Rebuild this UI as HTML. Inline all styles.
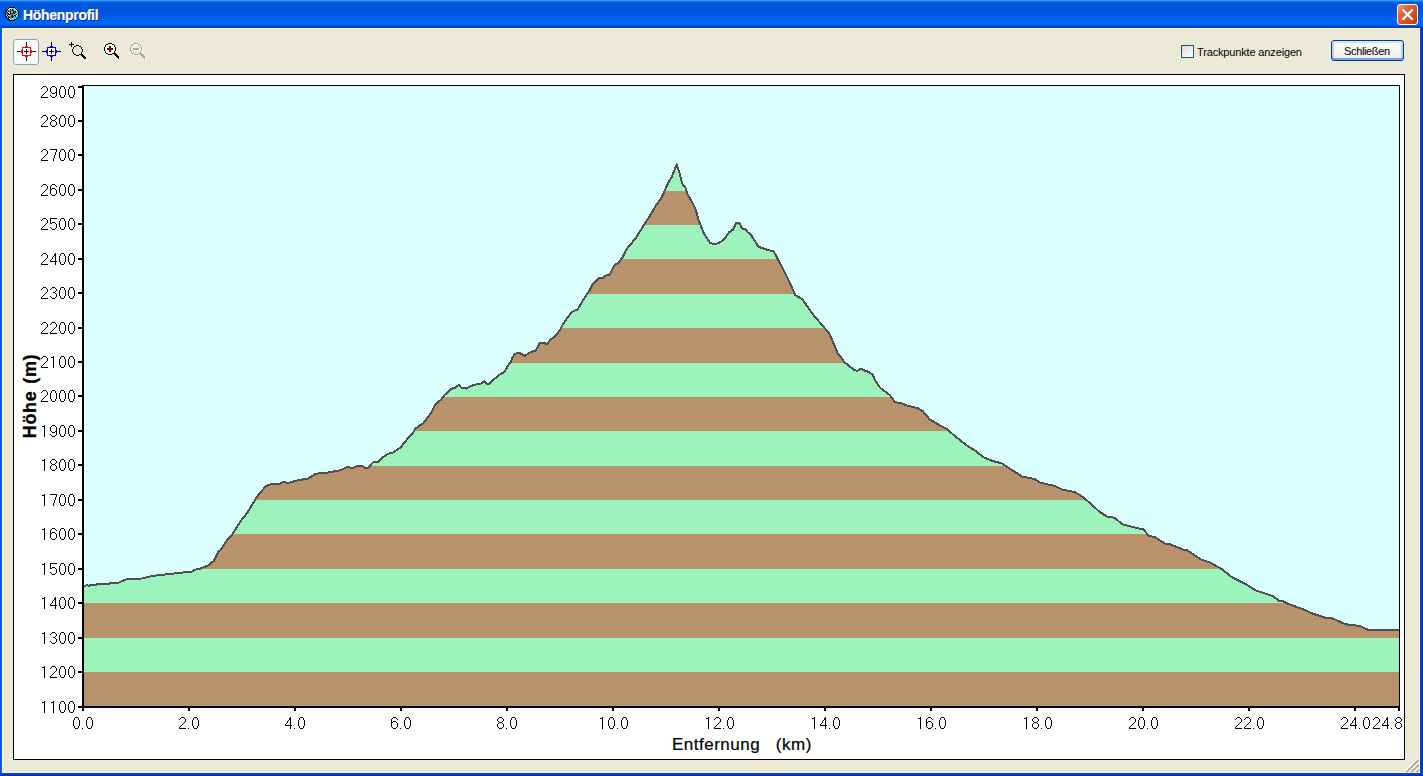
<!DOCTYPE html>
<html><head><meta charset="utf-8"><style>
html,body{margin:0;padding:0;width:1423px;height:776px;overflow:hidden;background:#ece9d8;font-family:"Liberation Sans",sans-serif;}
#win{position:absolute;left:0;top:0;width:1423px;height:776px;background:#ece9d8;}
#title{position:absolute;left:0;top:0;width:1423px;height:29px;
background:linear-gradient(to bottom,#3d95ff 0px,#3d95ff 1px,#0a74ff 1px,#0a74ff 2px,#0062f0 2px,#005ade 3px,#0055db 4px,#0055db 11px,#0059e3 14px,#0061ee 18px,#0066fa 21px,#0064f6 24px,#0061f0 25px,#0050da 26px,#0040c8 27px,#0040c8 28px,#fff6dc 28px,#fff6dc 29px);}
#lb{position:absolute;left:0;top:28px;width:2px;height:748px;background:linear-gradient(to right,#0050e0,#1868f0);}
#rb{position:absolute;left:1420px;top:28px;width:3px;height:748px;background:linear-gradient(to right,#0048d8,#0030a8);}
#bb{position:absolute;left:0;top:773px;width:1423px;height:3px;background:linear-gradient(to bottom,#0048e0,#0030b0);}
#hl1{position:absolute;left:2px;top:28px;width:1px;height:745px;background:#fff6dc;}
#hl2{position:absolute;left:2px;top:772px;width:1418px;height:1px;background:#fff6dc;}
#hl3{position:absolute;left:1419px;top:28px;width:1px;height:745px;background:#fff6dc;}
#ttext{position:absolute;left:23px;top:7px;font-weight:bold;font-size:14px;line-height:16px;color:#fff;text-shadow:1px 1px 0 #0a1e80;letter-spacing:-0.3px;-webkit-text-stroke:0.2px #fff}
#close{position:absolute;left:1397px;top:4px;width:19px;height:19px;border:1px solid #fff;border-radius:3px;background:linear-gradient(135deg,#f0a080 0%,#e26440 30%,#d84a1e 70%,#c03a10 100%);}
#panel{position:absolute;left:13px;top:74px;width:1390px;height:684px;border:1px solid #000;background:#fff;}
.yl{position:absolute;left:20px;width:56px;text-align:right;font-size:16px;line-height:19px;color:#000;}
.xl{position:absolute;top:714px;width:60px;text-align:center;font-size:16px;line-height:19px;color:#000;}
#ytitle{position:absolute;left:30px;top:396px;transform:translate(-50%,-50%) rotate(-90deg);font-weight:bold;font-size:18px;line-height:20px;white-space:pre;letter-spacing:0.6px;word-spacing:1.5px;-webkit-text-stroke:0.3px #000;}
#xtitle{position:absolute;left:672px;top:735px;font-size:17px;line-height:19px;white-space:pre;letter-spacing:0.5px;-webkit-text-stroke:0.2px #000;}
#tbtn{position:absolute;left:13px;top:39px;width:24px;height:24px;border:1px solid #8aa2ba;border-radius:3px;background:#fcfcfb;}
#chk{position:absolute;left:1181px;top:45px;width:11px;height:11px;border:1px solid #1c5180;background:linear-gradient(135deg,#dcdcd6,#fff);}
#chkt{position:absolute;left:1197px;top:46px;font-size:11px;letter-spacing:-0.15px;color:#000;white-space:nowrap;}
#btn{position:absolute;left:1331px;top:40px;width:71px;height:19px;border:1px solid #003c74;border-radius:3px;background:linear-gradient(to bottom,#fcfcfa,#f0efea);box-shadow:inset 0 2px 0 #cde4ff, inset 0 -2px 0 #7d9ef0, inset 2px 0 0 #b4d0fa, inset -2px 0 0 #b4d0fa;}
#btnt{position:absolute;left:1344px;top:45px;letter-spacing:-0.35px;font-size:11px;color:#000;white-space:nowrap;}
</style></head><body><div id="win">
<div id="title"></div>
<div id="lb"></div><div id="rb"></div><div id="bb"></div>
<div id="hl1"></div><div id="hl2"></div><div id="hl3"></div>
<div id="ttext">Höhenprofil</div>
<div id="close"></div>
<div id="tbtn"></div>
<div id="chk"></div><div id="chkt">Trackpunkte anzeigen</div>
<div id="btn"></div><div id="btnt">Schließen</div>
<div id="panel"></div>
<svg width="1423" height="776" style="position:absolute;left:0;top:0"><g shape-rendering="crispEdges"><rect x="84" y="88" width="1315" height="34" fill="#9cf4bc"/><rect x="84" y="122" width="1315" height="34" fill="#b8926a"/><rect x="84" y="156" width="1315" height="35" fill="#9cf4bc"/><rect x="84" y="191" width="1315" height="34" fill="#b8926a"/><rect x="84" y="225" width="1315" height="34" fill="#9cf4bc"/><rect x="84" y="259" width="1315" height="35" fill="#b8926a"/><rect x="84" y="294" width="1315" height="34" fill="#9cf4bc"/><rect x="84" y="328" width="1315" height="35" fill="#b8926a"/><rect x="84" y="363" width="1315" height="34" fill="#9cf4bc"/><rect x="84" y="397" width="1315" height="34" fill="#b8926a"/><rect x="84" y="431" width="1315" height="35" fill="#9cf4bc"/><rect x="84" y="466" width="1315" height="34" fill="#b8926a"/><rect x="84" y="500" width="1315" height="34" fill="#9cf4bc"/><rect x="84" y="534" width="1315" height="35" fill="#b8926a"/><rect x="84" y="569" width="1315" height="34" fill="#9cf4bc"/><rect x="84" y="603" width="1315" height="35" fill="#b8926a"/><rect x="84" y="638" width="1315" height="34" fill="#9cf4bc"/><rect x="84" y="672" width="1315" height="34" fill="#b8926a"/></g><polygon points="84,86 84,586.2 84.0,586.2 87.5,585.0 89.0,586.5 90.5,584.9 96.5,584.6 97.5,583.9 109.5,583.7 110.5,582.7 118.5,582.6 127.0,579.0 141.9,578.5 153.0,575.8 161.0,574.9 176.7,573.2 192.5,571.5 194.7,569.8 199.2,569.0 208.0,565.6 213.9,560.8 218.4,551.8 220.0,550.6 226.2,541.3 232.4,534.4 240.1,522.0 247.8,511.9 254.8,500.3 257.1,496.5 261.8,491.0 265.6,486.4 271.0,484.1 280.3,483.6 283.4,481.8 288.0,483.0 297.3,480.5 308.2,478.4 315.9,473.7 328.3,472.5 340.6,470.2 346.8,467.1 353.0,467.8 358.2,465.7 362.1,466.1 364.7,467.6 367.9,467.9 373.0,462.5 377.6,462.2 382.7,457.3 388.5,453.7 393.0,452.4 400.1,447.7 402.0,445.7 409.1,436.7 413.0,432.8 414.9,429.0 418.1,426.6 423.3,423.2 427.8,417.4 431.0,412.9 434.9,405.1 437.5,402.6 440.7,400.0 444.6,394.8 447.8,392.2 451.0,388.8 455.0,388.0 458.9,384.8 461.4,388.0 466.6,388.6 469.2,386.7 474.3,384.8 480.8,383.5 484.6,381.5 487.2,383.9 489.8,383.5 492.4,380.3 496.2,377.7 499.5,374.8 504.6,371.9 507.8,366.1 511.0,361.6 512.3,357.7 514.9,353.8 519.4,352.9 525.2,355.8 530.4,352.2 535.5,350.6 540.0,342.9 545.2,342.9 546.5,344.4 551.0,339.3 555.0,336.3 560.2,329.9 562.7,324.7 567.9,317.0 571.8,311.9 577.6,309.5 580.8,304.1 584.6,297.7 589.1,291.2 592.4,284.8 598.8,278.1 603.3,277.7 606.5,275.1 609.1,275.5 614.3,265.5 618.1,262.9 621.4,259.0 623.9,255.2 625.9,250.0 635.7,238.1 644.2,224.7 650.4,214.9 656.5,204.5 660.2,200.0 664.0,192.4 667.9,183.4 671.8,176.9 676.6,164.5 679.5,173.0 682.0,183.4 685.3,187.2 687.2,193.7 692.4,202.7 695.6,209.1 698.8,220.7 704.0,233.6 710.4,243.3 715.6,243.9 719.4,242.6 724.6,238.8 729.1,232.3 733.0,229.7 736.2,222.6 739.4,222.6 742.0,228.5 745.2,229.1 747.8,232.3 751.0,234.9 754.2,240.0 758.4,246.8 766.9,249.6 773.9,251.6 782.5,268.0 789.5,282.2 795.2,295.0 802.3,299.2 812.2,313.4 819.3,321.9 829.2,333.3 833.9,344.2 837.7,353.2 841.0,357.1 844.2,362.2 849.3,366.1 853.2,369.3 857.1,371.0 860.9,368.7 864.8,370.6 868.7,371.9 872.5,374.5 875.7,381.5 879.6,387.3 885.4,391.9 889.9,395.1 895.1,402.2 900.9,403.2 908.6,406.0 917.6,408.0 922.8,411.2 929.2,418.9 938.7,424.8 946.4,428.7 952.6,434.1 964.9,444.1 975.8,451.1 983.5,457.3 992.8,461.1 1002.0,463.4 1011.3,469.6 1022.1,476.6 1034.5,478.9 1040.7,482.8 1054.6,485.9 1062.3,489.7 1074.7,492.0 1082.4,496.7 1090.0,503.1 1099.3,511.6 1107.0,516.6 1114.7,517.8 1122.5,524.3 1131.7,526.8 1143.3,529.4 1148.8,535.6 1154.9,537.2 1165.8,544.1 1168.9,543.8 1182.8,549.5 1185.9,549.5 1201.3,559.6 1210.6,562.7 1221.4,568.9 1232.2,577.4 1244.6,583.5 1255.4,590.2 1272.4,595.9 1279.0,600.8 1283.3,601.3 1289.1,604.2 1302.8,609.2 1312.0,613.3 1325.7,617.9 1331.2,617.9 1345.8,624.3 1360.4,626.1 1367.7,629.7 1399.0,629.7 1399,629.7 1399,86" fill="#dcffff"/><polyline points="84.0,586.2 87.5,585.0 89.0,586.5 90.5,584.9 96.5,584.6 97.5,583.9 109.5,583.7 110.5,582.7 118.5,582.6 127.0,579.0 141.9,578.5 153.0,575.8 161.0,574.9 176.7,573.2 192.5,571.5 194.7,569.8 199.2,569.0 208.0,565.6 213.9,560.8 218.4,551.8 220.0,550.6 226.2,541.3 232.4,534.4 240.1,522.0 247.8,511.9 254.8,500.3 257.1,496.5 261.8,491.0 265.6,486.4 271.0,484.1 280.3,483.6 283.4,481.8 288.0,483.0 297.3,480.5 308.2,478.4 315.9,473.7 328.3,472.5 340.6,470.2 346.8,467.1 353.0,467.8 358.2,465.7 362.1,466.1 364.7,467.6 367.9,467.9 373.0,462.5 377.6,462.2 382.7,457.3 388.5,453.7 393.0,452.4 400.1,447.7 402.0,445.7 409.1,436.7 413.0,432.8 414.9,429.0 418.1,426.6 423.3,423.2 427.8,417.4 431.0,412.9 434.9,405.1 437.5,402.6 440.7,400.0 444.6,394.8 447.8,392.2 451.0,388.8 455.0,388.0 458.9,384.8 461.4,388.0 466.6,388.6 469.2,386.7 474.3,384.8 480.8,383.5 484.6,381.5 487.2,383.9 489.8,383.5 492.4,380.3 496.2,377.7 499.5,374.8 504.6,371.9 507.8,366.1 511.0,361.6 512.3,357.7 514.9,353.8 519.4,352.9 525.2,355.8 530.4,352.2 535.5,350.6 540.0,342.9 545.2,342.9 546.5,344.4 551.0,339.3 555.0,336.3 560.2,329.9 562.7,324.7 567.9,317.0 571.8,311.9 577.6,309.5 580.8,304.1 584.6,297.7 589.1,291.2 592.4,284.8 598.8,278.1 603.3,277.7 606.5,275.1 609.1,275.5 614.3,265.5 618.1,262.9 621.4,259.0 623.9,255.2 625.9,250.0 635.7,238.1 644.2,224.7 650.4,214.9 656.5,204.5 660.2,200.0 664.0,192.4 667.9,183.4 671.8,176.9 676.6,164.5 679.5,173.0 682.0,183.4 685.3,187.2 687.2,193.7 692.4,202.7 695.6,209.1 698.8,220.7 704.0,233.6 710.4,243.3 715.6,243.9 719.4,242.6 724.6,238.8 729.1,232.3 733.0,229.7 736.2,222.6 739.4,222.6 742.0,228.5 745.2,229.1 747.8,232.3 751.0,234.9 754.2,240.0 758.4,246.8 766.9,249.6 773.9,251.6 782.5,268.0 789.5,282.2 795.2,295.0 802.3,299.2 812.2,313.4 819.3,321.9 829.2,333.3 833.9,344.2 837.7,353.2 841.0,357.1 844.2,362.2 849.3,366.1 853.2,369.3 857.1,371.0 860.9,368.7 864.8,370.6 868.7,371.9 872.5,374.5 875.7,381.5 879.6,387.3 885.4,391.9 889.9,395.1 895.1,402.2 900.9,403.2 908.6,406.0 917.6,408.0 922.8,411.2 929.2,418.9 938.7,424.8 946.4,428.7 952.6,434.1 964.9,444.1 975.8,451.1 983.5,457.3 992.8,461.1 1002.0,463.4 1011.3,469.6 1022.1,476.6 1034.5,478.9 1040.7,482.8 1054.6,485.9 1062.3,489.7 1074.7,492.0 1082.4,496.7 1090.0,503.1 1099.3,511.6 1107.0,516.6 1114.7,517.8 1122.5,524.3 1131.7,526.8 1143.3,529.4 1148.8,535.6 1154.9,537.2 1165.8,544.1 1168.9,543.8 1182.8,549.5 1185.9,549.5 1201.3,559.6 1210.6,562.7 1221.4,568.9 1232.2,577.4 1244.6,583.5 1255.4,590.2 1272.4,595.9 1279.0,600.8 1283.3,601.3 1289.1,604.2 1302.8,609.2 1312.0,613.3 1325.7,617.9 1331.2,617.9 1345.8,624.3 1360.4,626.1 1367.7,629.7 1399.0,629.7" fill="none" stroke="#4f4f53" stroke-width="2" stroke-linejoin="round" shape-rendering="crispEdges"/><g shape-rendering="crispEdges" fill="#000"><rect x="82" y="85" width="2" height="622"/><rect x="82" y="706" width="1318" height="2"/><rect x="84" y="85" width="1316" height="1"/><rect x="1399" y="85" width="1" height="622"/><rect x="78" y="86" width="4" height="2"/><rect x="78" y="120" width="4" height="2"/><rect x="78" y="154" width="4" height="2"/><rect x="78" y="189" width="4" height="2"/><rect x="78" y="223" width="4" height="2"/><rect x="78" y="258" width="4" height="2"/><rect x="78" y="292" width="4" height="2"/><rect x="78" y="327" width="4" height="2"/><rect x="78" y="361" width="4" height="2"/><rect x="78" y="395" width="4" height="2"/><rect x="78" y="430" width="4" height="2"/><rect x="78" y="464" width="4" height="2"/><rect x="78" y="499" width="4" height="2"/><rect x="78" y="533" width="4" height="2"/><rect x="78" y="568" width="4" height="2"/><rect x="78" y="602" width="4" height="2"/><rect x="78" y="637" width="4" height="2"/><rect x="78" y="671" width="4" height="2"/><rect x="78" y="706" width="4" height="2"/><rect x="82" y="708" width="2" height="3"/><rect x="188" y="708" width="2" height="3"/><rect x="294" y="708" width="2" height="3"/><rect x="400" y="708" width="2" height="3"/><rect x="506" y="708" width="2" height="3"/><rect x="612" y="708" width="2" height="3"/><rect x="718" y="708" width="2" height="3"/><rect x="824" y="708" width="2" height="3"/><rect x="930" y="708" width="2" height="3"/><rect x="1036" y="708" width="2" height="3"/><rect x="1142" y="708" width="2" height="3"/><rect x="1248" y="708" width="2" height="3"/><rect x="1354" y="708" width="2" height="3"/><rect x="1398" y="708" width="2" height="3"/></g></svg>
<svg width="1423" height="80" style="position:absolute;left:0;top:0"><g shape-rendering="crispEdges"><rect x="26" y="42" width="1" height="3" fill="#000"/><rect x="26" y="58" width="1" height="3" fill="#000"/><rect x="17" y="51" width="3" height="1" fill="#000"/><rect x="33" y="51" width="3" height="1" fill="#000"/><rect x="26" y="45" width="1" height="1" fill="#ff0000"/><rect x="25" y="46" width="3" height="1" fill="#ff0000"/><rect x="26" y="57" width="1" height="1" fill="#ff0000"/><rect x="25" y="56" width="3" height="1" fill="#ff0000"/><rect x="20" y="51" width="1" height="1" fill="#ff0000"/><rect x="21" y="50" width="1" height="3" fill="#ff0000"/><rect x="32" y="51" width="1" height="1" fill="#ff0000"/><rect x="31" y="50" width="1" height="3" fill="#ff0000"/><rect x="22" y="47" width="9" height="9" fill="#ff0000"/><rect x="23" y="48" width="7" height="7" fill="#fff"/><rect x="24" y="51" width="5" height="1" fill="#000"/><rect x="26" y="49" width="1" height="5" fill="#000"/><rect x="51" y="42" width="1" height="3" fill="#000"/><rect x="51" y="58" width="1" height="3" fill="#000"/><rect x="42" y="51" width="3" height="1" fill="#000"/><rect x="58" y="51" width="3" height="1" fill="#000"/><rect x="51" y="45" width="1" height="1" fill="#0000ff"/><rect x="50" y="46" width="3" height="1" fill="#0000ff"/><rect x="51" y="57" width="1" height="1" fill="#0000ff"/><rect x="50" y="56" width="3" height="1" fill="#0000ff"/><rect x="45" y="51" width="1" height="1" fill="#0000ff"/><rect x="46" y="50" width="1" height="3" fill="#0000ff"/><rect x="57" y="51" width="1" height="1" fill="#0000ff"/><rect x="56" y="50" width="1" height="3" fill="#0000ff"/><rect x="47" y="47" width="9" height="9" fill="#0000ff"/><rect x="48" y="48" width="7" height="7" fill="#fff"/><rect x="49" y="51" width="5" height="1" fill="#000"/><rect x="51" y="49" width="1" height="5" fill="#000"/></g><g shape-rendering="crispEdges"><path fill="#000" d="M69 44h5v1h-5zM71 42h1v5h-1zM76 45h3v1h-3zM74 46h2v1h-2zM79 46h2v1h-2zM73 47h1v1h-1zM81 47h1v1h-1zM73 48h1v1h-1zM81 48h1v1h-1zM72 49h1v1h-1zM82 49h1v1h-1zM72 50h1v1h-1zM82 50h1v1h-1zM72 51h1v1h-1zM82 51h1v1h-1zM73 52h1v1h-1zM81 52h1v1h-1zM73 53h1v1h-1zM81 53h1v1h-1zM74 54h2v1h-2zM79 54h2v1h-2zM76 55h3v1h-3zM81 54h2v1h-2zM81 55h3v1h-3zM82 56h3v1h-3zM83 57h3v1h-3zM84 58h2v1h-2z"/><path fill="#fff" d="M108 44h4v1h-4zM106 45h8v1h-8zM106 46h8v1h-8zM105 47h10v1h-10zM105 48h10v1h-10zM105 49h10v1h-10zM105 50h10v1h-10zM106 51h8v1h-8zM106 52h8v1h-8zM108 53h4v1h-4z"/><path fill="#000" d="M108 43h4v1h-4zM106 44h2v1h-2zM112 44h2v1h-2zM105 45h1v1h-1zM114 45h1v1h-1zM105 46h1v1h-1zM114 46h1v1h-1zM104 47h1v1h-1zM115 47h1v1h-1zM104 48h1v1h-1zM115 48h1v1h-1zM104 49h1v1h-1zM115 49h1v1h-1zM104 50h1v1h-1zM115 50h1v1h-1zM105 51h1v1h-1zM114 51h1v1h-1zM105 52h1v1h-1zM114 52h1v1h-1zM106 53h2v1h-2zM112 53h2v1h-2zM108 54h4v1h-4zM114 53h2v1h-2zM114 54h3v1h-3zM115 55h3v1h-3zM116 56h3v1h-3zM117 57h2v1h-2zM118 58h1v1h-1z"/><path fill="#800000" d="M107 48h6v2h-6zM109 46h2v6h-2z"/><path fill="#fff" d="M135 44h4v1h-4zM133 45h2v1h-2zM139 45h2v1h-2zM132 46h1v1h-1zM141 46h1v1h-1zM132 47h1v1h-1zM141 47h1v1h-1zM131 48h1v1h-1zM142 48h1v1h-1zM131 49h1v1h-1zM142 49h1v1h-1zM131 50h1v1h-1zM142 50h1v1h-1zM131 51h1v1h-1zM142 51h1v1h-1zM132 52h1v1h-1zM141 52h1v1h-1zM132 53h1v1h-1zM141 53h1v1h-1zM133 54h2v1h-2zM139 54h2v1h-2zM135 55h4v1h-4zM141 54h2v1h-2zM141 55h3v1h-3zM142 56h3v1h-3zM143 57h3v1h-3zM144 58h2v1h-2zM134 49h6v2h-6z"/><path fill="#aca899" d="M134 43h4v1h-4zM132 44h2v1h-2zM138 44h2v1h-2zM131 45h1v1h-1zM140 45h1v1h-1zM131 46h1v1h-1zM140 46h1v1h-1zM130 47h1v1h-1zM141 47h1v1h-1zM130 48h1v1h-1zM141 48h1v1h-1zM130 49h1v1h-1zM141 49h1v1h-1zM130 50h1v1h-1zM141 50h1v1h-1zM131 51h1v1h-1zM140 51h1v1h-1zM131 52h1v1h-1zM140 52h1v1h-1zM132 53h2v1h-2zM138 53h2v1h-2zM134 54h4v1h-4zM140 53h2v1h-2zM140 54h3v1h-3zM141 55h3v1h-3zM142 56h3v1h-3zM143 57h2v1h-2zM144 58h1v1h-1zM133 48h6v2h-6z"/></g><g shape-rendering="crispEdges"><path fill="#000000" d="M9 7h1v1h-1zM10 7h1v1h-1zM11 7h1v1h-1zM12 7h1v1h-1zM13 7h1v1h-1zM14 7h1v1h-1zM8 8h1v1h-1zM15 8h1v1h-1zM7 9h1v1h-1zM10 9h1v1h-1zM12 9h1v1h-1zM16 9h1v1h-1zM6 10h1v1h-1zM12 10h1v1h-1zM17 10h1v1h-1zM6 11h1v1h-1zM8 11h1v1h-1zM10 11h1v1h-1zM13 11h1v1h-1zM15 11h1v1h-1zM18 11h1v1h-1zM5 12h1v1h-1zM7 12h1v1h-1zM10 12h1v1h-1zM13 12h1v1h-1zM15 12h1v1h-1zM18 12h1v1h-1zM5 13h1v1h-1zM8 13h1v1h-1zM10 13h1v1h-1zM13 13h1v1h-1zM14 13h1v1h-1zM18 13h1v1h-1zM5 14h1v1h-1zM8 14h1v1h-1zM9 14h1v1h-1zM16 14h1v1h-1zM18 14h1v1h-1zM5 15h1v1h-1zM7 15h1v1h-1zM12 15h1v1h-1zM14 15h1v1h-1zM15 15h1v1h-1zM18 15h1v1h-1zM5 16h1v1h-1zM6 16h1v1h-1zM8 16h1v1h-1zM11 16h1v1h-1zM12 16h1v1h-1zM13 16h1v1h-1zM15 16h1v1h-1zM18 16h1v1h-1zM6 17h1v1h-1zM9 17h1v1h-1zM12 17h1v1h-1zM17 17h1v1h-1zM7 18h1v1h-1zM8 18h1v1h-1zM16 18h1v1h-1zM8 19h1v1h-1zM9 19h1v1h-1zM14 19h1v1h-1zM15 19h1v1h-1zM9 20h1v1h-1zM10 20h1v1h-1zM11 20h1v1h-1zM12 20h1v1h-1zM13 20h1v1h-1zM14 20h1v1h-1z"/><path fill="#f4dcd4" d="M9 8h1v1h-1zM10 8h1v1h-1zM11 8h1v1h-1zM14 8h1v1h-1zM8 9h1v1h-1zM9 9h1v1h-1zM15 9h1v1h-1zM16 10h1v1h-1zM7 11h1v1h-1zM8 12h1v1h-1zM9 13h1v1h-1zM17 14h1v1h-1zM8 15h1v1h-1zM16 15h1v1h-1zM14 16h1v1h-1zM17 16h1v1h-1zM9 18h1v1h-1zM12 18h1v1h-1zM10 19h1v1h-1z"/><path fill="#00f0f0" d="M12 8h1v1h-1zM13 8h1v1h-1zM11 9h1v1h-1zM13 9h1v1h-1zM14 9h1v1h-1zM9 10h1v1h-1zM14 10h1v1h-1zM15 10h1v1h-1zM9 11h1v1h-1zM11 11h1v1h-1zM12 11h1v1h-1zM16 11h1v1h-1zM17 11h1v1h-1zM6 12h1v1h-1zM9 12h1v1h-1zM11 12h1v1h-1zM12 12h1v1h-1zM16 12h1v1h-1zM17 12h1v1h-1zM15 13h1v1h-1zM16 13h1v1h-1zM17 13h1v1h-1zM6 14h1v1h-1zM13 14h1v1h-1zM14 14h1v1h-1zM15 14h1v1h-1zM6 15h1v1h-1zM9 15h1v1h-1zM10 15h1v1h-1zM13 15h1v1h-1zM17 15h1v1h-1zM7 16h1v1h-1zM9 16h1v1h-1zM10 16h1v1h-1zM16 16h1v1h-1zM7 17h1v1h-1zM13 17h1v1h-1zM14 17h1v1h-1zM15 17h1v1h-1zM16 17h1v1h-1zM10 18h1v1h-1zM11 18h1v1h-1zM13 18h1v1h-1zM14 18h1v1h-1zM15 18h1v1h-1zM11 19h1v1h-1zM12 19h1v1h-1zM13 19h1v1h-1z"/><path fill="#ff1010" d="M7 10h1v1h-1zM8 10h1v1h-1zM10 10h1v1h-1zM11 10h1v1h-1zM13 10h1v1h-1zM14 11h1v1h-1zM14 12h1v1h-1zM6 13h1v1h-1zM7 13h1v1h-1zM11 13h1v1h-1zM12 13h1v1h-1zM7 14h1v1h-1zM10 14h1v1h-1zM11 14h1v1h-1zM12 14h1v1h-1zM11 15h1v1h-1zM8 17h1v1h-1zM10 17h1v1h-1zM11 17h1v1h-1z"/></g><g stroke="#fff" stroke-width="2.3" stroke-linecap="square"><line x1="1403.3" y1="10.3" x2="1411.9" y2="18.9"/><line x1="1411.9" y1="10.3" x2="1403.3" y2="18.9"/></g><g stroke-width="1" shape-rendering="crispEdges"></g></svg>
<svg width="23" height="24" style="position:absolute;left:1400px;top:752px"><line x1="5" y1="19.5" x2="18" y2="6.5" stroke="#ffffff" stroke-width="1.3"/><line x1="6.3" y1="20.2" x2="18.6" y2="7.9" stroke="#aca899" stroke-width="1.8"/><line x1="10" y1="19.5" x2="18" y2="11.5" stroke="#ffffff" stroke-width="1.3"/><line x1="11.3" y1="20.2" x2="18.6" y2="12.9" stroke="#aca899" stroke-width="1.8"/><line x1="15" y1="19.5" x2="18" y2="16.5" stroke="#ffffff" stroke-width="1.3"/><line x1="16.3" y1="20.2" x2="18.6" y2="17.9" stroke="#aca899" stroke-width="1.8"/></svg>
<svg width="1423" height="776" style="position:absolute;left:0;top:0" shape-rendering="crispEdges"><g fill="#000"><path transform="translate(41 86)" d="M2 0h3v1h-3zM1 1h1v1h-1zM5 1h1v1h-1zM0 2h1v1h-1zM6 2h1v1h-1zM6 3h1v1h-1zM6 4h1v1h-1zM5 5h1v1h-1zM4 6h1v1h-1zM3 7h1v1h-1zM2 8h1v1h-1zM1 9h1v1h-1zM0 10h1v1h-1zM0 11h7v1h-7z"/><path transform="translate(50 86)" d="M2 0h3v1h-3zM1 1h1v1h-1zM5 1h1v1h-1zM0 2h1v1h-1zM6 2h1v1h-1zM0 3h1v1h-1zM6 3h1v1h-1zM0 4h1v1h-1zM6 4h1v1h-1zM0 5h1v1h-1zM6 5h1v1h-1zM1 6h1v1h-1zM5 6h2v1h-2zM2 7h3v1h-3zM6 7h1v1h-1zM6 8h1v1h-1zM0 9h1v1h-1zM6 9h1v1h-1zM1 10h1v1h-1zM5 10h1v1h-1zM2 11h3v1h-3z"/><path transform="translate(59 86)" d="M2 0h3v1h-3zM1 1h1v1h-1zM5 1h1v1h-1zM1 2h1v1h-1zM5 2h1v1h-1zM0 3h1v1h-1zM6 3h1v1h-1zM0 4h1v1h-1zM6 4h1v1h-1zM0 5h1v1h-1zM6 5h1v1h-1zM0 6h1v1h-1zM6 6h1v1h-1zM0 7h1v1h-1zM6 7h1v1h-1zM0 8h1v1h-1zM6 8h1v1h-1zM1 9h1v1h-1zM5 9h1v1h-1zM1 10h1v1h-1zM5 10h1v1h-1zM2 11h3v1h-3z"/><path transform="translate(68 86)" d="M2 0h3v1h-3zM1 1h1v1h-1zM5 1h1v1h-1zM1 2h1v1h-1zM5 2h1v1h-1zM0 3h1v1h-1zM6 3h1v1h-1zM0 4h1v1h-1zM6 4h1v1h-1zM0 5h1v1h-1zM6 5h1v1h-1zM0 6h1v1h-1zM6 6h1v1h-1zM0 7h1v1h-1zM6 7h1v1h-1zM0 8h1v1h-1zM6 8h1v1h-1zM1 9h1v1h-1zM5 9h1v1h-1zM1 10h1v1h-1zM5 10h1v1h-1zM2 11h3v1h-3z"/><path transform="translate(41 115)" d="M2 0h3v1h-3zM1 1h1v1h-1zM5 1h1v1h-1zM0 2h1v1h-1zM6 2h1v1h-1zM6 3h1v1h-1zM6 4h1v1h-1zM5 5h1v1h-1zM4 6h1v1h-1zM3 7h1v1h-1zM2 8h1v1h-1zM1 9h1v1h-1zM0 10h1v1h-1zM0 11h7v1h-7z"/><path transform="translate(50 115)" d="M2 0h3v1h-3zM1 1h1v1h-1zM5 1h1v1h-1zM0 2h1v1h-1zM6 2h1v1h-1zM0 3h1v1h-1zM6 3h1v1h-1zM1 4h1v1h-1zM5 4h1v1h-1zM2 5h3v1h-3zM1 6h1v1h-1zM5 6h1v1h-1zM0 7h1v1h-1zM6 7h1v1h-1zM0 8h1v1h-1zM6 8h1v1h-1zM0 9h1v1h-1zM6 9h1v1h-1zM1 10h1v1h-1zM5 10h1v1h-1zM2 11h3v1h-3z"/><path transform="translate(59 115)" d="M2 0h3v1h-3zM1 1h1v1h-1zM5 1h1v1h-1zM1 2h1v1h-1zM5 2h1v1h-1zM0 3h1v1h-1zM6 3h1v1h-1zM0 4h1v1h-1zM6 4h1v1h-1zM0 5h1v1h-1zM6 5h1v1h-1zM0 6h1v1h-1zM6 6h1v1h-1zM0 7h1v1h-1zM6 7h1v1h-1zM0 8h1v1h-1zM6 8h1v1h-1zM1 9h1v1h-1zM5 9h1v1h-1zM1 10h1v1h-1zM5 10h1v1h-1zM2 11h3v1h-3z"/><path transform="translate(68 115)" d="M2 0h3v1h-3zM1 1h1v1h-1zM5 1h1v1h-1zM1 2h1v1h-1zM5 2h1v1h-1zM0 3h1v1h-1zM6 3h1v1h-1zM0 4h1v1h-1zM6 4h1v1h-1zM0 5h1v1h-1zM6 5h1v1h-1zM0 6h1v1h-1zM6 6h1v1h-1zM0 7h1v1h-1zM6 7h1v1h-1zM0 8h1v1h-1zM6 8h1v1h-1zM1 9h1v1h-1zM5 9h1v1h-1zM1 10h1v1h-1zM5 10h1v1h-1zM2 11h3v1h-3z"/><path transform="translate(41 149)" d="M2 0h3v1h-3zM1 1h1v1h-1zM5 1h1v1h-1zM0 2h1v1h-1zM6 2h1v1h-1zM6 3h1v1h-1zM6 4h1v1h-1zM5 5h1v1h-1zM4 6h1v1h-1zM3 7h1v1h-1zM2 8h1v1h-1zM1 9h1v1h-1zM0 10h1v1h-1zM0 11h7v1h-7z"/><path transform="translate(50 149)" d="M0 0h7v1h-7zM6 1h1v1h-1zM6 2h1v1h-1zM5 3h1v1h-1zM5 4h1v1h-1zM5 5h1v1h-1zM4 6h1v1h-1zM4 7h1v1h-1zM4 8h1v1h-1zM3 9h1v1h-1zM3 10h1v1h-1zM3 11h1v1h-1z"/><path transform="translate(59 149)" d="M2 0h3v1h-3zM1 1h1v1h-1zM5 1h1v1h-1zM1 2h1v1h-1zM5 2h1v1h-1zM0 3h1v1h-1zM6 3h1v1h-1zM0 4h1v1h-1zM6 4h1v1h-1zM0 5h1v1h-1zM6 5h1v1h-1zM0 6h1v1h-1zM6 6h1v1h-1zM0 7h1v1h-1zM6 7h1v1h-1zM0 8h1v1h-1zM6 8h1v1h-1zM1 9h1v1h-1zM5 9h1v1h-1zM1 10h1v1h-1zM5 10h1v1h-1zM2 11h3v1h-3z"/><path transform="translate(68 149)" d="M2 0h3v1h-3zM1 1h1v1h-1zM5 1h1v1h-1zM1 2h1v1h-1zM5 2h1v1h-1zM0 3h1v1h-1zM6 3h1v1h-1zM0 4h1v1h-1zM6 4h1v1h-1zM0 5h1v1h-1zM6 5h1v1h-1zM0 6h1v1h-1zM6 6h1v1h-1zM0 7h1v1h-1zM6 7h1v1h-1zM0 8h1v1h-1zM6 8h1v1h-1zM1 9h1v1h-1zM5 9h1v1h-1zM1 10h1v1h-1zM5 10h1v1h-1zM2 11h3v1h-3z"/><path transform="translate(41 184)" d="M2 0h3v1h-3zM1 1h1v1h-1zM5 1h1v1h-1zM0 2h1v1h-1zM6 2h1v1h-1zM6 3h1v1h-1zM6 4h1v1h-1zM5 5h1v1h-1zM4 6h1v1h-1zM3 7h1v1h-1zM2 8h1v1h-1zM1 9h1v1h-1zM0 10h1v1h-1zM0 11h7v1h-7z"/><path transform="translate(50 184)" d="M2 0h3v1h-3zM1 1h1v1h-1zM5 1h1v1h-1zM0 2h1v1h-1zM6 2h1v1h-1zM0 3h1v1h-1zM0 4h1v1h-1zM2 4h3v1h-3zM0 5h2v1h-2zM5 5h1v1h-1zM0 6h1v1h-1zM6 6h1v1h-1zM0 7h1v1h-1zM6 7h1v1h-1zM0 8h1v1h-1zM6 8h1v1h-1zM0 9h1v1h-1zM6 9h1v1h-1zM1 10h1v1h-1zM5 10h1v1h-1zM2 11h3v1h-3z"/><path transform="translate(59 184)" d="M2 0h3v1h-3zM1 1h1v1h-1zM5 1h1v1h-1zM1 2h1v1h-1zM5 2h1v1h-1zM0 3h1v1h-1zM6 3h1v1h-1zM0 4h1v1h-1zM6 4h1v1h-1zM0 5h1v1h-1zM6 5h1v1h-1zM0 6h1v1h-1zM6 6h1v1h-1zM0 7h1v1h-1zM6 7h1v1h-1zM0 8h1v1h-1zM6 8h1v1h-1zM1 9h1v1h-1zM5 9h1v1h-1zM1 10h1v1h-1zM5 10h1v1h-1zM2 11h3v1h-3z"/><path transform="translate(68 184)" d="M2 0h3v1h-3zM1 1h1v1h-1zM5 1h1v1h-1zM1 2h1v1h-1zM5 2h1v1h-1zM0 3h1v1h-1zM6 3h1v1h-1zM0 4h1v1h-1zM6 4h1v1h-1zM0 5h1v1h-1zM6 5h1v1h-1zM0 6h1v1h-1zM6 6h1v1h-1zM0 7h1v1h-1zM6 7h1v1h-1zM0 8h1v1h-1zM6 8h1v1h-1zM1 9h1v1h-1zM5 9h1v1h-1zM1 10h1v1h-1zM5 10h1v1h-1zM2 11h3v1h-3z"/><path transform="translate(41 218)" d="M2 0h3v1h-3zM1 1h1v1h-1zM5 1h1v1h-1zM0 2h1v1h-1zM6 2h1v1h-1zM6 3h1v1h-1zM6 4h1v1h-1zM5 5h1v1h-1zM4 6h1v1h-1zM3 7h1v1h-1zM2 8h1v1h-1zM1 9h1v1h-1zM0 10h1v1h-1zM0 11h7v1h-7z"/><path transform="translate(50 218)" d="M0 0h7v1h-7zM0 1h1v1h-1zM0 2h1v1h-1zM0 3h1v1h-1zM0 4h1v1h-1zM2 4h3v1h-3zM0 5h2v1h-2zM5 5h1v1h-1zM6 6h1v1h-1zM6 7h1v1h-1zM6 8h1v1h-1zM0 9h1v1h-1zM6 9h1v1h-1zM1 10h1v1h-1zM5 10h1v1h-1zM2 11h3v1h-3z"/><path transform="translate(59 218)" d="M2 0h3v1h-3zM1 1h1v1h-1zM5 1h1v1h-1zM1 2h1v1h-1zM5 2h1v1h-1zM0 3h1v1h-1zM6 3h1v1h-1zM0 4h1v1h-1zM6 4h1v1h-1zM0 5h1v1h-1zM6 5h1v1h-1zM0 6h1v1h-1zM6 6h1v1h-1zM0 7h1v1h-1zM6 7h1v1h-1zM0 8h1v1h-1zM6 8h1v1h-1zM1 9h1v1h-1zM5 9h1v1h-1zM1 10h1v1h-1zM5 10h1v1h-1zM2 11h3v1h-3z"/><path transform="translate(68 218)" d="M2 0h3v1h-3zM1 1h1v1h-1zM5 1h1v1h-1zM1 2h1v1h-1zM5 2h1v1h-1zM0 3h1v1h-1zM6 3h1v1h-1zM0 4h1v1h-1zM6 4h1v1h-1zM0 5h1v1h-1zM6 5h1v1h-1zM0 6h1v1h-1zM6 6h1v1h-1zM0 7h1v1h-1zM6 7h1v1h-1zM0 8h1v1h-1zM6 8h1v1h-1zM1 9h1v1h-1zM5 9h1v1h-1zM1 10h1v1h-1zM5 10h1v1h-1zM2 11h3v1h-3z"/><path transform="translate(41 253)" d="M2 0h3v1h-3zM1 1h1v1h-1zM5 1h1v1h-1zM0 2h1v1h-1zM6 2h1v1h-1zM6 3h1v1h-1zM6 4h1v1h-1zM5 5h1v1h-1zM4 6h1v1h-1zM3 7h1v1h-1zM2 8h1v1h-1zM1 9h1v1h-1zM0 10h1v1h-1zM0 11h7v1h-7z"/><path transform="translate(50 253)" d="M5 0h1v1h-1zM4 1h2v1h-2zM4 2h2v1h-2zM3 3h1v1h-1zM5 3h1v1h-1zM2 4h1v1h-1zM5 4h1v1h-1zM2 5h1v1h-1zM5 5h1v1h-1zM1 6h1v1h-1zM5 6h1v1h-1zM0 7h1v1h-1zM5 7h1v1h-1zM0 8h7v1h-7zM5 9h1v1h-1zM5 10h1v1h-1zM5 11h1v1h-1z"/><path transform="translate(59 253)" d="M2 0h3v1h-3zM1 1h1v1h-1zM5 1h1v1h-1zM1 2h1v1h-1zM5 2h1v1h-1zM0 3h1v1h-1zM6 3h1v1h-1zM0 4h1v1h-1zM6 4h1v1h-1zM0 5h1v1h-1zM6 5h1v1h-1zM0 6h1v1h-1zM6 6h1v1h-1zM0 7h1v1h-1zM6 7h1v1h-1zM0 8h1v1h-1zM6 8h1v1h-1zM1 9h1v1h-1zM5 9h1v1h-1zM1 10h1v1h-1zM5 10h1v1h-1zM2 11h3v1h-3z"/><path transform="translate(68 253)" d="M2 0h3v1h-3zM1 1h1v1h-1zM5 1h1v1h-1zM1 2h1v1h-1zM5 2h1v1h-1zM0 3h1v1h-1zM6 3h1v1h-1zM0 4h1v1h-1zM6 4h1v1h-1zM0 5h1v1h-1zM6 5h1v1h-1zM0 6h1v1h-1zM6 6h1v1h-1zM0 7h1v1h-1zM6 7h1v1h-1zM0 8h1v1h-1zM6 8h1v1h-1zM1 9h1v1h-1zM5 9h1v1h-1zM1 10h1v1h-1zM5 10h1v1h-1zM2 11h3v1h-3z"/><path transform="translate(41 287)" d="M2 0h3v1h-3zM1 1h1v1h-1zM5 1h1v1h-1zM0 2h1v1h-1zM6 2h1v1h-1zM6 3h1v1h-1zM6 4h1v1h-1zM5 5h1v1h-1zM4 6h1v1h-1zM3 7h1v1h-1zM2 8h1v1h-1zM1 9h1v1h-1zM0 10h1v1h-1zM0 11h7v1h-7z"/><path transform="translate(50 287)" d="M2 0h3v1h-3zM1 1h1v1h-1zM5 1h1v1h-1zM0 2h1v1h-1zM6 2h1v1h-1zM6 3h1v1h-1zM5 4h1v1h-1zM3 5h2v1h-2zM5 6h1v1h-1zM6 7h1v1h-1zM6 8h1v1h-1zM0 9h1v1h-1zM6 9h1v1h-1zM1 10h1v1h-1zM5 10h1v1h-1zM2 11h3v1h-3z"/><path transform="translate(59 287)" d="M2 0h3v1h-3zM1 1h1v1h-1zM5 1h1v1h-1zM1 2h1v1h-1zM5 2h1v1h-1zM0 3h1v1h-1zM6 3h1v1h-1zM0 4h1v1h-1zM6 4h1v1h-1zM0 5h1v1h-1zM6 5h1v1h-1zM0 6h1v1h-1zM6 6h1v1h-1zM0 7h1v1h-1zM6 7h1v1h-1zM0 8h1v1h-1zM6 8h1v1h-1zM1 9h1v1h-1zM5 9h1v1h-1zM1 10h1v1h-1zM5 10h1v1h-1zM2 11h3v1h-3z"/><path transform="translate(68 287)" d="M2 0h3v1h-3zM1 1h1v1h-1zM5 1h1v1h-1zM1 2h1v1h-1zM5 2h1v1h-1zM0 3h1v1h-1zM6 3h1v1h-1zM0 4h1v1h-1zM6 4h1v1h-1zM0 5h1v1h-1zM6 5h1v1h-1zM0 6h1v1h-1zM6 6h1v1h-1zM0 7h1v1h-1zM6 7h1v1h-1zM0 8h1v1h-1zM6 8h1v1h-1zM1 9h1v1h-1zM5 9h1v1h-1zM1 10h1v1h-1zM5 10h1v1h-1zM2 11h3v1h-3z"/><path transform="translate(41 322)" d="M2 0h3v1h-3zM1 1h1v1h-1zM5 1h1v1h-1zM0 2h1v1h-1zM6 2h1v1h-1zM6 3h1v1h-1zM6 4h1v1h-1zM5 5h1v1h-1zM4 6h1v1h-1zM3 7h1v1h-1zM2 8h1v1h-1zM1 9h1v1h-1zM0 10h1v1h-1zM0 11h7v1h-7z"/><path transform="translate(50 322)" d="M2 0h3v1h-3zM1 1h1v1h-1zM5 1h1v1h-1zM0 2h1v1h-1zM6 2h1v1h-1zM6 3h1v1h-1zM6 4h1v1h-1zM5 5h1v1h-1zM4 6h1v1h-1zM3 7h1v1h-1zM2 8h1v1h-1zM1 9h1v1h-1zM0 10h1v1h-1zM0 11h7v1h-7z"/><path transform="translate(59 322)" d="M2 0h3v1h-3zM1 1h1v1h-1zM5 1h1v1h-1zM1 2h1v1h-1zM5 2h1v1h-1zM0 3h1v1h-1zM6 3h1v1h-1zM0 4h1v1h-1zM6 4h1v1h-1zM0 5h1v1h-1zM6 5h1v1h-1zM0 6h1v1h-1zM6 6h1v1h-1zM0 7h1v1h-1zM6 7h1v1h-1zM0 8h1v1h-1zM6 8h1v1h-1zM1 9h1v1h-1zM5 9h1v1h-1zM1 10h1v1h-1zM5 10h1v1h-1zM2 11h3v1h-3z"/><path transform="translate(68 322)" d="M2 0h3v1h-3zM1 1h1v1h-1zM5 1h1v1h-1zM1 2h1v1h-1zM5 2h1v1h-1zM0 3h1v1h-1zM6 3h1v1h-1zM0 4h1v1h-1zM6 4h1v1h-1zM0 5h1v1h-1zM6 5h1v1h-1zM0 6h1v1h-1zM6 6h1v1h-1zM0 7h1v1h-1zM6 7h1v1h-1zM0 8h1v1h-1zM6 8h1v1h-1zM1 9h1v1h-1zM5 9h1v1h-1zM1 10h1v1h-1zM5 10h1v1h-1zM2 11h3v1h-3z"/><path transform="translate(41 356)" d="M2 0h3v1h-3zM1 1h1v1h-1zM5 1h1v1h-1zM0 2h1v1h-1zM6 2h1v1h-1zM6 3h1v1h-1zM6 4h1v1h-1zM5 5h1v1h-1zM4 6h1v1h-1zM3 7h1v1h-1zM2 8h1v1h-1zM1 9h1v1h-1zM0 10h1v1h-1zM0 11h7v1h-7z"/><path transform="translate(50 356)" d="M3 0h1v1h-1zM1 1h3v1h-3zM3 2h1v1h-1zM3 3h1v1h-1zM3 4h1v1h-1zM3 5h1v1h-1zM3 6h1v1h-1zM3 7h1v1h-1zM3 8h1v1h-1zM3 9h1v1h-1zM3 10h1v1h-1zM3 11h1v1h-1z"/><path transform="translate(59 356)" d="M2 0h3v1h-3zM1 1h1v1h-1zM5 1h1v1h-1zM1 2h1v1h-1zM5 2h1v1h-1zM0 3h1v1h-1zM6 3h1v1h-1zM0 4h1v1h-1zM6 4h1v1h-1zM0 5h1v1h-1zM6 5h1v1h-1zM0 6h1v1h-1zM6 6h1v1h-1zM0 7h1v1h-1zM6 7h1v1h-1zM0 8h1v1h-1zM6 8h1v1h-1zM1 9h1v1h-1zM5 9h1v1h-1zM1 10h1v1h-1zM5 10h1v1h-1zM2 11h3v1h-3z"/><path transform="translate(68 356)" d="M2 0h3v1h-3zM1 1h1v1h-1zM5 1h1v1h-1zM1 2h1v1h-1zM5 2h1v1h-1zM0 3h1v1h-1zM6 3h1v1h-1zM0 4h1v1h-1zM6 4h1v1h-1zM0 5h1v1h-1zM6 5h1v1h-1zM0 6h1v1h-1zM6 6h1v1h-1zM0 7h1v1h-1zM6 7h1v1h-1zM0 8h1v1h-1zM6 8h1v1h-1zM1 9h1v1h-1zM5 9h1v1h-1zM1 10h1v1h-1zM5 10h1v1h-1zM2 11h3v1h-3z"/><path transform="translate(41 390)" d="M2 0h3v1h-3zM1 1h1v1h-1zM5 1h1v1h-1zM0 2h1v1h-1zM6 2h1v1h-1zM6 3h1v1h-1zM6 4h1v1h-1zM5 5h1v1h-1zM4 6h1v1h-1zM3 7h1v1h-1zM2 8h1v1h-1zM1 9h1v1h-1zM0 10h1v1h-1zM0 11h7v1h-7z"/><path transform="translate(50 390)" d="M2 0h3v1h-3zM1 1h1v1h-1zM5 1h1v1h-1zM1 2h1v1h-1zM5 2h1v1h-1zM0 3h1v1h-1zM6 3h1v1h-1zM0 4h1v1h-1zM6 4h1v1h-1zM0 5h1v1h-1zM6 5h1v1h-1zM0 6h1v1h-1zM6 6h1v1h-1zM0 7h1v1h-1zM6 7h1v1h-1zM0 8h1v1h-1zM6 8h1v1h-1zM1 9h1v1h-1zM5 9h1v1h-1zM1 10h1v1h-1zM5 10h1v1h-1zM2 11h3v1h-3z"/><path transform="translate(59 390)" d="M2 0h3v1h-3zM1 1h1v1h-1zM5 1h1v1h-1zM1 2h1v1h-1zM5 2h1v1h-1zM0 3h1v1h-1zM6 3h1v1h-1zM0 4h1v1h-1zM6 4h1v1h-1zM0 5h1v1h-1zM6 5h1v1h-1zM0 6h1v1h-1zM6 6h1v1h-1zM0 7h1v1h-1zM6 7h1v1h-1zM0 8h1v1h-1zM6 8h1v1h-1zM1 9h1v1h-1zM5 9h1v1h-1zM1 10h1v1h-1zM5 10h1v1h-1zM2 11h3v1h-3z"/><path transform="translate(68 390)" d="M2 0h3v1h-3zM1 1h1v1h-1zM5 1h1v1h-1zM1 2h1v1h-1zM5 2h1v1h-1zM0 3h1v1h-1zM6 3h1v1h-1zM0 4h1v1h-1zM6 4h1v1h-1zM0 5h1v1h-1zM6 5h1v1h-1zM0 6h1v1h-1zM6 6h1v1h-1zM0 7h1v1h-1zM6 7h1v1h-1zM0 8h1v1h-1zM6 8h1v1h-1zM1 9h1v1h-1zM5 9h1v1h-1zM1 10h1v1h-1zM5 10h1v1h-1zM2 11h3v1h-3z"/><path transform="translate(41 425)" d="M3 0h1v1h-1zM1 1h3v1h-3zM3 2h1v1h-1zM3 3h1v1h-1zM3 4h1v1h-1zM3 5h1v1h-1zM3 6h1v1h-1zM3 7h1v1h-1zM3 8h1v1h-1zM3 9h1v1h-1zM3 10h1v1h-1zM3 11h1v1h-1z"/><path transform="translate(50 425)" d="M2 0h3v1h-3zM1 1h1v1h-1zM5 1h1v1h-1zM0 2h1v1h-1zM6 2h1v1h-1zM0 3h1v1h-1zM6 3h1v1h-1zM0 4h1v1h-1zM6 4h1v1h-1zM0 5h1v1h-1zM6 5h1v1h-1zM1 6h1v1h-1zM5 6h2v1h-2zM2 7h3v1h-3zM6 7h1v1h-1zM6 8h1v1h-1zM0 9h1v1h-1zM6 9h1v1h-1zM1 10h1v1h-1zM5 10h1v1h-1zM2 11h3v1h-3z"/><path transform="translate(59 425)" d="M2 0h3v1h-3zM1 1h1v1h-1zM5 1h1v1h-1zM1 2h1v1h-1zM5 2h1v1h-1zM0 3h1v1h-1zM6 3h1v1h-1zM0 4h1v1h-1zM6 4h1v1h-1zM0 5h1v1h-1zM6 5h1v1h-1zM0 6h1v1h-1zM6 6h1v1h-1zM0 7h1v1h-1zM6 7h1v1h-1zM0 8h1v1h-1zM6 8h1v1h-1zM1 9h1v1h-1zM5 9h1v1h-1zM1 10h1v1h-1zM5 10h1v1h-1zM2 11h3v1h-3z"/><path transform="translate(68 425)" d="M2 0h3v1h-3zM1 1h1v1h-1zM5 1h1v1h-1zM1 2h1v1h-1zM5 2h1v1h-1zM0 3h1v1h-1zM6 3h1v1h-1zM0 4h1v1h-1zM6 4h1v1h-1zM0 5h1v1h-1zM6 5h1v1h-1zM0 6h1v1h-1zM6 6h1v1h-1zM0 7h1v1h-1zM6 7h1v1h-1zM0 8h1v1h-1zM6 8h1v1h-1zM1 9h1v1h-1zM5 9h1v1h-1zM1 10h1v1h-1zM5 10h1v1h-1zM2 11h3v1h-3z"/><path transform="translate(41 459)" d="M3 0h1v1h-1zM1 1h3v1h-3zM3 2h1v1h-1zM3 3h1v1h-1zM3 4h1v1h-1zM3 5h1v1h-1zM3 6h1v1h-1zM3 7h1v1h-1zM3 8h1v1h-1zM3 9h1v1h-1zM3 10h1v1h-1zM3 11h1v1h-1z"/><path transform="translate(50 459)" d="M2 0h3v1h-3zM1 1h1v1h-1zM5 1h1v1h-1zM0 2h1v1h-1zM6 2h1v1h-1zM0 3h1v1h-1zM6 3h1v1h-1zM1 4h1v1h-1zM5 4h1v1h-1zM2 5h3v1h-3zM1 6h1v1h-1zM5 6h1v1h-1zM0 7h1v1h-1zM6 7h1v1h-1zM0 8h1v1h-1zM6 8h1v1h-1zM0 9h1v1h-1zM6 9h1v1h-1zM1 10h1v1h-1zM5 10h1v1h-1zM2 11h3v1h-3z"/><path transform="translate(59 459)" d="M2 0h3v1h-3zM1 1h1v1h-1zM5 1h1v1h-1zM1 2h1v1h-1zM5 2h1v1h-1zM0 3h1v1h-1zM6 3h1v1h-1zM0 4h1v1h-1zM6 4h1v1h-1zM0 5h1v1h-1zM6 5h1v1h-1zM0 6h1v1h-1zM6 6h1v1h-1zM0 7h1v1h-1zM6 7h1v1h-1zM0 8h1v1h-1zM6 8h1v1h-1zM1 9h1v1h-1zM5 9h1v1h-1zM1 10h1v1h-1zM5 10h1v1h-1zM2 11h3v1h-3z"/><path transform="translate(68 459)" d="M2 0h3v1h-3zM1 1h1v1h-1zM5 1h1v1h-1zM1 2h1v1h-1zM5 2h1v1h-1zM0 3h1v1h-1zM6 3h1v1h-1zM0 4h1v1h-1zM6 4h1v1h-1zM0 5h1v1h-1zM6 5h1v1h-1zM0 6h1v1h-1zM6 6h1v1h-1zM0 7h1v1h-1zM6 7h1v1h-1zM0 8h1v1h-1zM6 8h1v1h-1zM1 9h1v1h-1zM5 9h1v1h-1zM1 10h1v1h-1zM5 10h1v1h-1zM2 11h3v1h-3z"/><path transform="translate(41 494)" d="M3 0h1v1h-1zM1 1h3v1h-3zM3 2h1v1h-1zM3 3h1v1h-1zM3 4h1v1h-1zM3 5h1v1h-1zM3 6h1v1h-1zM3 7h1v1h-1zM3 8h1v1h-1zM3 9h1v1h-1zM3 10h1v1h-1zM3 11h1v1h-1z"/><path transform="translate(50 494)" d="M0 0h7v1h-7zM6 1h1v1h-1zM6 2h1v1h-1zM5 3h1v1h-1zM5 4h1v1h-1zM5 5h1v1h-1zM4 6h1v1h-1zM4 7h1v1h-1zM4 8h1v1h-1zM3 9h1v1h-1zM3 10h1v1h-1zM3 11h1v1h-1z"/><path transform="translate(59 494)" d="M2 0h3v1h-3zM1 1h1v1h-1zM5 1h1v1h-1zM1 2h1v1h-1zM5 2h1v1h-1zM0 3h1v1h-1zM6 3h1v1h-1zM0 4h1v1h-1zM6 4h1v1h-1zM0 5h1v1h-1zM6 5h1v1h-1zM0 6h1v1h-1zM6 6h1v1h-1zM0 7h1v1h-1zM6 7h1v1h-1zM0 8h1v1h-1zM6 8h1v1h-1zM1 9h1v1h-1zM5 9h1v1h-1zM1 10h1v1h-1zM5 10h1v1h-1zM2 11h3v1h-3z"/><path transform="translate(68 494)" d="M2 0h3v1h-3zM1 1h1v1h-1zM5 1h1v1h-1zM1 2h1v1h-1zM5 2h1v1h-1zM0 3h1v1h-1zM6 3h1v1h-1zM0 4h1v1h-1zM6 4h1v1h-1zM0 5h1v1h-1zM6 5h1v1h-1zM0 6h1v1h-1zM6 6h1v1h-1zM0 7h1v1h-1zM6 7h1v1h-1zM0 8h1v1h-1zM6 8h1v1h-1zM1 9h1v1h-1zM5 9h1v1h-1zM1 10h1v1h-1zM5 10h1v1h-1zM2 11h3v1h-3z"/><path transform="translate(41 528)" d="M3 0h1v1h-1zM1 1h3v1h-3zM3 2h1v1h-1zM3 3h1v1h-1zM3 4h1v1h-1zM3 5h1v1h-1zM3 6h1v1h-1zM3 7h1v1h-1zM3 8h1v1h-1zM3 9h1v1h-1zM3 10h1v1h-1zM3 11h1v1h-1z"/><path transform="translate(50 528)" d="M2 0h3v1h-3zM1 1h1v1h-1zM5 1h1v1h-1zM0 2h1v1h-1zM6 2h1v1h-1zM0 3h1v1h-1zM0 4h1v1h-1zM2 4h3v1h-3zM0 5h2v1h-2zM5 5h1v1h-1zM0 6h1v1h-1zM6 6h1v1h-1zM0 7h1v1h-1zM6 7h1v1h-1zM0 8h1v1h-1zM6 8h1v1h-1zM0 9h1v1h-1zM6 9h1v1h-1zM1 10h1v1h-1zM5 10h1v1h-1zM2 11h3v1h-3z"/><path transform="translate(59 528)" d="M2 0h3v1h-3zM1 1h1v1h-1zM5 1h1v1h-1zM1 2h1v1h-1zM5 2h1v1h-1zM0 3h1v1h-1zM6 3h1v1h-1zM0 4h1v1h-1zM6 4h1v1h-1zM0 5h1v1h-1zM6 5h1v1h-1zM0 6h1v1h-1zM6 6h1v1h-1zM0 7h1v1h-1zM6 7h1v1h-1zM0 8h1v1h-1zM6 8h1v1h-1zM1 9h1v1h-1zM5 9h1v1h-1zM1 10h1v1h-1zM5 10h1v1h-1zM2 11h3v1h-3z"/><path transform="translate(68 528)" d="M2 0h3v1h-3zM1 1h1v1h-1zM5 1h1v1h-1zM1 2h1v1h-1zM5 2h1v1h-1zM0 3h1v1h-1zM6 3h1v1h-1zM0 4h1v1h-1zM6 4h1v1h-1zM0 5h1v1h-1zM6 5h1v1h-1zM0 6h1v1h-1zM6 6h1v1h-1zM0 7h1v1h-1zM6 7h1v1h-1zM0 8h1v1h-1zM6 8h1v1h-1zM1 9h1v1h-1zM5 9h1v1h-1zM1 10h1v1h-1zM5 10h1v1h-1zM2 11h3v1h-3z"/><path transform="translate(41 563)" d="M3 0h1v1h-1zM1 1h3v1h-3zM3 2h1v1h-1zM3 3h1v1h-1zM3 4h1v1h-1zM3 5h1v1h-1zM3 6h1v1h-1zM3 7h1v1h-1zM3 8h1v1h-1zM3 9h1v1h-1zM3 10h1v1h-1zM3 11h1v1h-1z"/><path transform="translate(50 563)" d="M0 0h7v1h-7zM0 1h1v1h-1zM0 2h1v1h-1zM0 3h1v1h-1zM0 4h1v1h-1zM2 4h3v1h-3zM0 5h2v1h-2zM5 5h1v1h-1zM6 6h1v1h-1zM6 7h1v1h-1zM6 8h1v1h-1zM0 9h1v1h-1zM6 9h1v1h-1zM1 10h1v1h-1zM5 10h1v1h-1zM2 11h3v1h-3z"/><path transform="translate(59 563)" d="M2 0h3v1h-3zM1 1h1v1h-1zM5 1h1v1h-1zM1 2h1v1h-1zM5 2h1v1h-1zM0 3h1v1h-1zM6 3h1v1h-1zM0 4h1v1h-1zM6 4h1v1h-1zM0 5h1v1h-1zM6 5h1v1h-1zM0 6h1v1h-1zM6 6h1v1h-1zM0 7h1v1h-1zM6 7h1v1h-1zM0 8h1v1h-1zM6 8h1v1h-1zM1 9h1v1h-1zM5 9h1v1h-1zM1 10h1v1h-1zM5 10h1v1h-1zM2 11h3v1h-3z"/><path transform="translate(68 563)" d="M2 0h3v1h-3zM1 1h1v1h-1zM5 1h1v1h-1zM1 2h1v1h-1zM5 2h1v1h-1zM0 3h1v1h-1zM6 3h1v1h-1zM0 4h1v1h-1zM6 4h1v1h-1zM0 5h1v1h-1zM6 5h1v1h-1zM0 6h1v1h-1zM6 6h1v1h-1zM0 7h1v1h-1zM6 7h1v1h-1zM0 8h1v1h-1zM6 8h1v1h-1zM1 9h1v1h-1zM5 9h1v1h-1zM1 10h1v1h-1zM5 10h1v1h-1zM2 11h3v1h-3z"/><path transform="translate(41 597)" d="M3 0h1v1h-1zM1 1h3v1h-3zM3 2h1v1h-1zM3 3h1v1h-1zM3 4h1v1h-1zM3 5h1v1h-1zM3 6h1v1h-1zM3 7h1v1h-1zM3 8h1v1h-1zM3 9h1v1h-1zM3 10h1v1h-1zM3 11h1v1h-1z"/><path transform="translate(50 597)" d="M5 0h1v1h-1zM4 1h2v1h-2zM4 2h2v1h-2zM3 3h1v1h-1zM5 3h1v1h-1zM2 4h1v1h-1zM5 4h1v1h-1zM2 5h1v1h-1zM5 5h1v1h-1zM1 6h1v1h-1zM5 6h1v1h-1zM0 7h1v1h-1zM5 7h1v1h-1zM0 8h7v1h-7zM5 9h1v1h-1zM5 10h1v1h-1zM5 11h1v1h-1z"/><path transform="translate(59 597)" d="M2 0h3v1h-3zM1 1h1v1h-1zM5 1h1v1h-1zM1 2h1v1h-1zM5 2h1v1h-1zM0 3h1v1h-1zM6 3h1v1h-1zM0 4h1v1h-1zM6 4h1v1h-1zM0 5h1v1h-1zM6 5h1v1h-1zM0 6h1v1h-1zM6 6h1v1h-1zM0 7h1v1h-1zM6 7h1v1h-1zM0 8h1v1h-1zM6 8h1v1h-1zM1 9h1v1h-1zM5 9h1v1h-1zM1 10h1v1h-1zM5 10h1v1h-1zM2 11h3v1h-3z"/><path transform="translate(68 597)" d="M2 0h3v1h-3zM1 1h1v1h-1zM5 1h1v1h-1zM1 2h1v1h-1zM5 2h1v1h-1zM0 3h1v1h-1zM6 3h1v1h-1zM0 4h1v1h-1zM6 4h1v1h-1zM0 5h1v1h-1zM6 5h1v1h-1zM0 6h1v1h-1zM6 6h1v1h-1zM0 7h1v1h-1zM6 7h1v1h-1zM0 8h1v1h-1zM6 8h1v1h-1zM1 9h1v1h-1zM5 9h1v1h-1zM1 10h1v1h-1zM5 10h1v1h-1zM2 11h3v1h-3z"/><path transform="translate(41 632)" d="M3 0h1v1h-1zM1 1h3v1h-3zM3 2h1v1h-1zM3 3h1v1h-1zM3 4h1v1h-1zM3 5h1v1h-1zM3 6h1v1h-1zM3 7h1v1h-1zM3 8h1v1h-1zM3 9h1v1h-1zM3 10h1v1h-1zM3 11h1v1h-1z"/><path transform="translate(50 632)" d="M2 0h3v1h-3zM1 1h1v1h-1zM5 1h1v1h-1zM0 2h1v1h-1zM6 2h1v1h-1zM6 3h1v1h-1zM5 4h1v1h-1zM3 5h2v1h-2zM5 6h1v1h-1zM6 7h1v1h-1zM6 8h1v1h-1zM0 9h1v1h-1zM6 9h1v1h-1zM1 10h1v1h-1zM5 10h1v1h-1zM2 11h3v1h-3z"/><path transform="translate(59 632)" d="M2 0h3v1h-3zM1 1h1v1h-1zM5 1h1v1h-1zM1 2h1v1h-1zM5 2h1v1h-1zM0 3h1v1h-1zM6 3h1v1h-1zM0 4h1v1h-1zM6 4h1v1h-1zM0 5h1v1h-1zM6 5h1v1h-1zM0 6h1v1h-1zM6 6h1v1h-1zM0 7h1v1h-1zM6 7h1v1h-1zM0 8h1v1h-1zM6 8h1v1h-1zM1 9h1v1h-1zM5 9h1v1h-1zM1 10h1v1h-1zM5 10h1v1h-1zM2 11h3v1h-3z"/><path transform="translate(68 632)" d="M2 0h3v1h-3zM1 1h1v1h-1zM5 1h1v1h-1zM1 2h1v1h-1zM5 2h1v1h-1zM0 3h1v1h-1zM6 3h1v1h-1zM0 4h1v1h-1zM6 4h1v1h-1zM0 5h1v1h-1zM6 5h1v1h-1zM0 6h1v1h-1zM6 6h1v1h-1zM0 7h1v1h-1zM6 7h1v1h-1zM0 8h1v1h-1zM6 8h1v1h-1zM1 9h1v1h-1zM5 9h1v1h-1zM1 10h1v1h-1zM5 10h1v1h-1zM2 11h3v1h-3z"/><path transform="translate(41 666)" d="M3 0h1v1h-1zM1 1h3v1h-3zM3 2h1v1h-1zM3 3h1v1h-1zM3 4h1v1h-1zM3 5h1v1h-1zM3 6h1v1h-1zM3 7h1v1h-1zM3 8h1v1h-1zM3 9h1v1h-1zM3 10h1v1h-1zM3 11h1v1h-1z"/><path transform="translate(50 666)" d="M2 0h3v1h-3zM1 1h1v1h-1zM5 1h1v1h-1zM0 2h1v1h-1zM6 2h1v1h-1zM6 3h1v1h-1zM6 4h1v1h-1zM5 5h1v1h-1zM4 6h1v1h-1zM3 7h1v1h-1zM2 8h1v1h-1zM1 9h1v1h-1zM0 10h1v1h-1zM0 11h7v1h-7z"/><path transform="translate(59 666)" d="M2 0h3v1h-3zM1 1h1v1h-1zM5 1h1v1h-1zM1 2h1v1h-1zM5 2h1v1h-1zM0 3h1v1h-1zM6 3h1v1h-1zM0 4h1v1h-1zM6 4h1v1h-1zM0 5h1v1h-1zM6 5h1v1h-1zM0 6h1v1h-1zM6 6h1v1h-1zM0 7h1v1h-1zM6 7h1v1h-1zM0 8h1v1h-1zM6 8h1v1h-1zM1 9h1v1h-1zM5 9h1v1h-1zM1 10h1v1h-1zM5 10h1v1h-1zM2 11h3v1h-3z"/><path transform="translate(68 666)" d="M2 0h3v1h-3zM1 1h1v1h-1zM5 1h1v1h-1zM1 2h1v1h-1zM5 2h1v1h-1zM0 3h1v1h-1zM6 3h1v1h-1zM0 4h1v1h-1zM6 4h1v1h-1zM0 5h1v1h-1zM6 5h1v1h-1zM0 6h1v1h-1zM6 6h1v1h-1zM0 7h1v1h-1zM6 7h1v1h-1zM0 8h1v1h-1zM6 8h1v1h-1zM1 9h1v1h-1zM5 9h1v1h-1zM1 10h1v1h-1zM5 10h1v1h-1zM2 11h3v1h-3z"/><path transform="translate(41 701)" d="M3 0h1v1h-1zM1 1h3v1h-3zM3 2h1v1h-1zM3 3h1v1h-1zM3 4h1v1h-1zM3 5h1v1h-1zM3 6h1v1h-1zM3 7h1v1h-1zM3 8h1v1h-1zM3 9h1v1h-1zM3 10h1v1h-1zM3 11h1v1h-1z"/><path transform="translate(50 701)" d="M3 0h1v1h-1zM1 1h3v1h-3zM3 2h1v1h-1zM3 3h1v1h-1zM3 4h1v1h-1zM3 5h1v1h-1zM3 6h1v1h-1zM3 7h1v1h-1zM3 8h1v1h-1zM3 9h1v1h-1zM3 10h1v1h-1zM3 11h1v1h-1z"/><path transform="translate(59 701)" d="M2 0h3v1h-3zM1 1h1v1h-1zM5 1h1v1h-1zM1 2h1v1h-1zM5 2h1v1h-1zM0 3h1v1h-1zM6 3h1v1h-1zM0 4h1v1h-1zM6 4h1v1h-1zM0 5h1v1h-1zM6 5h1v1h-1zM0 6h1v1h-1zM6 6h1v1h-1zM0 7h1v1h-1zM6 7h1v1h-1zM0 8h1v1h-1zM6 8h1v1h-1zM1 9h1v1h-1zM5 9h1v1h-1zM1 10h1v1h-1zM5 10h1v1h-1zM2 11h3v1h-3z"/><path transform="translate(68 701)" d="M2 0h3v1h-3zM1 1h1v1h-1zM5 1h1v1h-1zM1 2h1v1h-1zM5 2h1v1h-1zM0 3h1v1h-1zM6 3h1v1h-1zM0 4h1v1h-1zM6 4h1v1h-1zM0 5h1v1h-1zM6 5h1v1h-1zM0 6h1v1h-1zM6 6h1v1h-1zM0 7h1v1h-1zM6 7h1v1h-1zM0 8h1v1h-1zM6 8h1v1h-1zM1 9h1v1h-1zM5 9h1v1h-1zM1 10h1v1h-1zM5 10h1v1h-1zM2 11h3v1h-3z"/><path transform="translate(73 717)" d="M2 0h3v1h-3zM1 1h1v1h-1zM5 1h1v1h-1zM1 2h1v1h-1zM5 2h1v1h-1zM0 3h1v1h-1zM6 3h1v1h-1zM0 4h1v1h-1zM6 4h1v1h-1zM0 5h1v1h-1zM6 5h1v1h-1zM0 6h1v1h-1zM6 6h1v1h-1zM0 7h1v1h-1zM6 7h1v1h-1zM0 8h1v1h-1zM6 8h1v1h-1zM1 9h1v1h-1zM5 9h1v1h-1zM1 10h1v1h-1zM5 10h1v1h-1zM2 11h3v1h-3z"/><path transform="translate(82 717)" d="M0 11h1v1h-1z"/><path transform="translate(86 717)" d="M2 0h3v1h-3zM1 1h1v1h-1zM5 1h1v1h-1zM1 2h1v1h-1zM5 2h1v1h-1zM0 3h1v1h-1zM6 3h1v1h-1zM0 4h1v1h-1zM6 4h1v1h-1zM0 5h1v1h-1zM6 5h1v1h-1zM0 6h1v1h-1zM6 6h1v1h-1zM0 7h1v1h-1zM6 7h1v1h-1zM0 8h1v1h-1zM6 8h1v1h-1zM1 9h1v1h-1zM5 9h1v1h-1zM1 10h1v1h-1zM5 10h1v1h-1zM2 11h3v1h-3z"/><path transform="translate(179 717)" d="M2 0h3v1h-3zM1 1h1v1h-1zM5 1h1v1h-1zM0 2h1v1h-1zM6 2h1v1h-1zM6 3h1v1h-1zM6 4h1v1h-1zM5 5h1v1h-1zM4 6h1v1h-1zM3 7h1v1h-1zM2 8h1v1h-1zM1 9h1v1h-1zM0 10h1v1h-1zM0 11h7v1h-7z"/><path transform="translate(188 717)" d="M0 11h1v1h-1z"/><path transform="translate(192 717)" d="M2 0h3v1h-3zM1 1h1v1h-1zM5 1h1v1h-1zM1 2h1v1h-1zM5 2h1v1h-1zM0 3h1v1h-1zM6 3h1v1h-1zM0 4h1v1h-1zM6 4h1v1h-1zM0 5h1v1h-1zM6 5h1v1h-1zM0 6h1v1h-1zM6 6h1v1h-1zM0 7h1v1h-1zM6 7h1v1h-1zM0 8h1v1h-1zM6 8h1v1h-1zM1 9h1v1h-1zM5 9h1v1h-1zM1 10h1v1h-1zM5 10h1v1h-1zM2 11h3v1h-3z"/><path transform="translate(285 717)" d="M5 0h1v1h-1zM4 1h2v1h-2zM4 2h2v1h-2zM3 3h1v1h-1zM5 3h1v1h-1zM2 4h1v1h-1zM5 4h1v1h-1zM2 5h1v1h-1zM5 5h1v1h-1zM1 6h1v1h-1zM5 6h1v1h-1zM0 7h1v1h-1zM5 7h1v1h-1zM0 8h7v1h-7zM5 9h1v1h-1zM5 10h1v1h-1zM5 11h1v1h-1z"/><path transform="translate(294 717)" d="M0 11h1v1h-1z"/><path transform="translate(298 717)" d="M2 0h3v1h-3zM1 1h1v1h-1zM5 1h1v1h-1zM1 2h1v1h-1zM5 2h1v1h-1zM0 3h1v1h-1zM6 3h1v1h-1zM0 4h1v1h-1zM6 4h1v1h-1zM0 5h1v1h-1zM6 5h1v1h-1zM0 6h1v1h-1zM6 6h1v1h-1zM0 7h1v1h-1zM6 7h1v1h-1zM0 8h1v1h-1zM6 8h1v1h-1zM1 9h1v1h-1zM5 9h1v1h-1zM1 10h1v1h-1zM5 10h1v1h-1zM2 11h3v1h-3z"/><path transform="translate(391 717)" d="M2 0h3v1h-3zM1 1h1v1h-1zM5 1h1v1h-1zM0 2h1v1h-1zM6 2h1v1h-1zM0 3h1v1h-1zM0 4h1v1h-1zM2 4h3v1h-3zM0 5h2v1h-2zM5 5h1v1h-1zM0 6h1v1h-1zM6 6h1v1h-1zM0 7h1v1h-1zM6 7h1v1h-1zM0 8h1v1h-1zM6 8h1v1h-1zM0 9h1v1h-1zM6 9h1v1h-1zM1 10h1v1h-1zM5 10h1v1h-1zM2 11h3v1h-3z"/><path transform="translate(400 717)" d="M0 11h1v1h-1z"/><path transform="translate(404 717)" d="M2 0h3v1h-3zM1 1h1v1h-1zM5 1h1v1h-1zM1 2h1v1h-1zM5 2h1v1h-1zM0 3h1v1h-1zM6 3h1v1h-1zM0 4h1v1h-1zM6 4h1v1h-1zM0 5h1v1h-1zM6 5h1v1h-1zM0 6h1v1h-1zM6 6h1v1h-1zM0 7h1v1h-1zM6 7h1v1h-1zM0 8h1v1h-1zM6 8h1v1h-1zM1 9h1v1h-1zM5 9h1v1h-1zM1 10h1v1h-1zM5 10h1v1h-1zM2 11h3v1h-3z"/><path transform="translate(497 717)" d="M2 0h3v1h-3zM1 1h1v1h-1zM5 1h1v1h-1zM0 2h1v1h-1zM6 2h1v1h-1zM0 3h1v1h-1zM6 3h1v1h-1zM1 4h1v1h-1zM5 4h1v1h-1zM2 5h3v1h-3zM1 6h1v1h-1zM5 6h1v1h-1zM0 7h1v1h-1zM6 7h1v1h-1zM0 8h1v1h-1zM6 8h1v1h-1zM0 9h1v1h-1zM6 9h1v1h-1zM1 10h1v1h-1zM5 10h1v1h-1zM2 11h3v1h-3z"/><path transform="translate(506 717)" d="M0 11h1v1h-1z"/><path transform="translate(510 717)" d="M2 0h3v1h-3zM1 1h1v1h-1zM5 1h1v1h-1zM1 2h1v1h-1zM5 2h1v1h-1zM0 3h1v1h-1zM6 3h1v1h-1zM0 4h1v1h-1zM6 4h1v1h-1zM0 5h1v1h-1zM6 5h1v1h-1zM0 6h1v1h-1zM6 6h1v1h-1zM0 7h1v1h-1zM6 7h1v1h-1zM0 8h1v1h-1zM6 8h1v1h-1zM1 9h1v1h-1zM5 9h1v1h-1zM1 10h1v1h-1zM5 10h1v1h-1zM2 11h3v1h-3z"/><path transform="translate(599 717)" d="M3 0h1v1h-1zM1 1h3v1h-3zM3 2h1v1h-1zM3 3h1v1h-1zM3 4h1v1h-1zM3 5h1v1h-1zM3 6h1v1h-1zM3 7h1v1h-1zM3 8h1v1h-1zM3 9h1v1h-1zM3 10h1v1h-1zM3 11h1v1h-1z"/><path transform="translate(608 717)" d="M2 0h3v1h-3zM1 1h1v1h-1zM5 1h1v1h-1zM1 2h1v1h-1zM5 2h1v1h-1zM0 3h1v1h-1zM6 3h1v1h-1zM0 4h1v1h-1zM6 4h1v1h-1zM0 5h1v1h-1zM6 5h1v1h-1zM0 6h1v1h-1zM6 6h1v1h-1zM0 7h1v1h-1zM6 7h1v1h-1zM0 8h1v1h-1zM6 8h1v1h-1zM1 9h1v1h-1zM5 9h1v1h-1zM1 10h1v1h-1zM5 10h1v1h-1zM2 11h3v1h-3z"/><path transform="translate(617 717)" d="M0 11h1v1h-1z"/><path transform="translate(621 717)" d="M2 0h3v1h-3zM1 1h1v1h-1zM5 1h1v1h-1zM1 2h1v1h-1zM5 2h1v1h-1zM0 3h1v1h-1zM6 3h1v1h-1zM0 4h1v1h-1zM6 4h1v1h-1zM0 5h1v1h-1zM6 5h1v1h-1zM0 6h1v1h-1zM6 6h1v1h-1zM0 7h1v1h-1zM6 7h1v1h-1zM0 8h1v1h-1zM6 8h1v1h-1zM1 9h1v1h-1zM5 9h1v1h-1zM1 10h1v1h-1zM5 10h1v1h-1zM2 11h3v1h-3z"/><path transform="translate(705 717)" d="M3 0h1v1h-1zM1 1h3v1h-3zM3 2h1v1h-1zM3 3h1v1h-1zM3 4h1v1h-1zM3 5h1v1h-1zM3 6h1v1h-1zM3 7h1v1h-1zM3 8h1v1h-1zM3 9h1v1h-1zM3 10h1v1h-1zM3 11h1v1h-1z"/><path transform="translate(714 717)" d="M2 0h3v1h-3zM1 1h1v1h-1zM5 1h1v1h-1zM0 2h1v1h-1zM6 2h1v1h-1zM6 3h1v1h-1zM6 4h1v1h-1zM5 5h1v1h-1zM4 6h1v1h-1zM3 7h1v1h-1zM2 8h1v1h-1zM1 9h1v1h-1zM0 10h1v1h-1zM0 11h7v1h-7z"/><path transform="translate(723 717)" d="M0 11h1v1h-1z"/><path transform="translate(727 717)" d="M2 0h3v1h-3zM1 1h1v1h-1zM5 1h1v1h-1zM1 2h1v1h-1zM5 2h1v1h-1zM0 3h1v1h-1zM6 3h1v1h-1zM0 4h1v1h-1zM6 4h1v1h-1zM0 5h1v1h-1zM6 5h1v1h-1zM0 6h1v1h-1zM6 6h1v1h-1zM0 7h1v1h-1zM6 7h1v1h-1zM0 8h1v1h-1zM6 8h1v1h-1zM1 9h1v1h-1zM5 9h1v1h-1zM1 10h1v1h-1zM5 10h1v1h-1zM2 11h3v1h-3z"/><path transform="translate(811 717)" d="M3 0h1v1h-1zM1 1h3v1h-3zM3 2h1v1h-1zM3 3h1v1h-1zM3 4h1v1h-1zM3 5h1v1h-1zM3 6h1v1h-1zM3 7h1v1h-1zM3 8h1v1h-1zM3 9h1v1h-1zM3 10h1v1h-1zM3 11h1v1h-1z"/><path transform="translate(820 717)" d="M5 0h1v1h-1zM4 1h2v1h-2zM4 2h2v1h-2zM3 3h1v1h-1zM5 3h1v1h-1zM2 4h1v1h-1zM5 4h1v1h-1zM2 5h1v1h-1zM5 5h1v1h-1zM1 6h1v1h-1zM5 6h1v1h-1zM0 7h1v1h-1zM5 7h1v1h-1zM0 8h7v1h-7zM5 9h1v1h-1zM5 10h1v1h-1zM5 11h1v1h-1z"/><path transform="translate(829 717)" d="M0 11h1v1h-1z"/><path transform="translate(833 717)" d="M2 0h3v1h-3zM1 1h1v1h-1zM5 1h1v1h-1zM1 2h1v1h-1zM5 2h1v1h-1zM0 3h1v1h-1zM6 3h1v1h-1zM0 4h1v1h-1zM6 4h1v1h-1zM0 5h1v1h-1zM6 5h1v1h-1zM0 6h1v1h-1zM6 6h1v1h-1zM0 7h1v1h-1zM6 7h1v1h-1zM0 8h1v1h-1zM6 8h1v1h-1zM1 9h1v1h-1zM5 9h1v1h-1zM1 10h1v1h-1zM5 10h1v1h-1zM2 11h3v1h-3z"/><path transform="translate(917 717)" d="M3 0h1v1h-1zM1 1h3v1h-3zM3 2h1v1h-1zM3 3h1v1h-1zM3 4h1v1h-1zM3 5h1v1h-1zM3 6h1v1h-1zM3 7h1v1h-1zM3 8h1v1h-1zM3 9h1v1h-1zM3 10h1v1h-1zM3 11h1v1h-1z"/><path transform="translate(926 717)" d="M2 0h3v1h-3zM1 1h1v1h-1zM5 1h1v1h-1zM0 2h1v1h-1zM6 2h1v1h-1zM0 3h1v1h-1zM0 4h1v1h-1zM2 4h3v1h-3zM0 5h2v1h-2zM5 5h1v1h-1zM0 6h1v1h-1zM6 6h1v1h-1zM0 7h1v1h-1zM6 7h1v1h-1zM0 8h1v1h-1zM6 8h1v1h-1zM0 9h1v1h-1zM6 9h1v1h-1zM1 10h1v1h-1zM5 10h1v1h-1zM2 11h3v1h-3z"/><path transform="translate(935 717)" d="M0 11h1v1h-1z"/><path transform="translate(939 717)" d="M2 0h3v1h-3zM1 1h1v1h-1zM5 1h1v1h-1zM1 2h1v1h-1zM5 2h1v1h-1zM0 3h1v1h-1zM6 3h1v1h-1zM0 4h1v1h-1zM6 4h1v1h-1zM0 5h1v1h-1zM6 5h1v1h-1zM0 6h1v1h-1zM6 6h1v1h-1zM0 7h1v1h-1zM6 7h1v1h-1zM0 8h1v1h-1zM6 8h1v1h-1zM1 9h1v1h-1zM5 9h1v1h-1zM1 10h1v1h-1zM5 10h1v1h-1zM2 11h3v1h-3z"/><path transform="translate(1023 717)" d="M3 0h1v1h-1zM1 1h3v1h-3zM3 2h1v1h-1zM3 3h1v1h-1zM3 4h1v1h-1zM3 5h1v1h-1zM3 6h1v1h-1zM3 7h1v1h-1zM3 8h1v1h-1zM3 9h1v1h-1zM3 10h1v1h-1zM3 11h1v1h-1z"/><path transform="translate(1032 717)" d="M2 0h3v1h-3zM1 1h1v1h-1zM5 1h1v1h-1zM0 2h1v1h-1zM6 2h1v1h-1zM0 3h1v1h-1zM6 3h1v1h-1zM1 4h1v1h-1zM5 4h1v1h-1zM2 5h3v1h-3zM1 6h1v1h-1zM5 6h1v1h-1zM0 7h1v1h-1zM6 7h1v1h-1zM0 8h1v1h-1zM6 8h1v1h-1zM0 9h1v1h-1zM6 9h1v1h-1zM1 10h1v1h-1zM5 10h1v1h-1zM2 11h3v1h-3z"/><path transform="translate(1041 717)" d="M0 11h1v1h-1z"/><path transform="translate(1045 717)" d="M2 0h3v1h-3zM1 1h1v1h-1zM5 1h1v1h-1zM1 2h1v1h-1zM5 2h1v1h-1zM0 3h1v1h-1zM6 3h1v1h-1zM0 4h1v1h-1zM6 4h1v1h-1zM0 5h1v1h-1zM6 5h1v1h-1zM0 6h1v1h-1zM6 6h1v1h-1zM0 7h1v1h-1zM6 7h1v1h-1zM0 8h1v1h-1zM6 8h1v1h-1zM1 9h1v1h-1zM5 9h1v1h-1zM1 10h1v1h-1zM5 10h1v1h-1zM2 11h3v1h-3z"/><path transform="translate(1129 717)" d="M2 0h3v1h-3zM1 1h1v1h-1zM5 1h1v1h-1zM0 2h1v1h-1zM6 2h1v1h-1zM6 3h1v1h-1zM6 4h1v1h-1zM5 5h1v1h-1zM4 6h1v1h-1zM3 7h1v1h-1zM2 8h1v1h-1zM1 9h1v1h-1zM0 10h1v1h-1zM0 11h7v1h-7z"/><path transform="translate(1138 717)" d="M2 0h3v1h-3zM1 1h1v1h-1zM5 1h1v1h-1zM1 2h1v1h-1zM5 2h1v1h-1zM0 3h1v1h-1zM6 3h1v1h-1zM0 4h1v1h-1zM6 4h1v1h-1zM0 5h1v1h-1zM6 5h1v1h-1zM0 6h1v1h-1zM6 6h1v1h-1zM0 7h1v1h-1zM6 7h1v1h-1zM0 8h1v1h-1zM6 8h1v1h-1zM1 9h1v1h-1zM5 9h1v1h-1zM1 10h1v1h-1zM5 10h1v1h-1zM2 11h3v1h-3z"/><path transform="translate(1147 717)" d="M0 11h1v1h-1z"/><path transform="translate(1151 717)" d="M2 0h3v1h-3zM1 1h1v1h-1zM5 1h1v1h-1zM1 2h1v1h-1zM5 2h1v1h-1zM0 3h1v1h-1zM6 3h1v1h-1zM0 4h1v1h-1zM6 4h1v1h-1zM0 5h1v1h-1zM6 5h1v1h-1zM0 6h1v1h-1zM6 6h1v1h-1zM0 7h1v1h-1zM6 7h1v1h-1zM0 8h1v1h-1zM6 8h1v1h-1zM1 9h1v1h-1zM5 9h1v1h-1zM1 10h1v1h-1zM5 10h1v1h-1zM2 11h3v1h-3z"/><path transform="translate(1235 717)" d="M2 0h3v1h-3zM1 1h1v1h-1zM5 1h1v1h-1zM0 2h1v1h-1zM6 2h1v1h-1zM6 3h1v1h-1zM6 4h1v1h-1zM5 5h1v1h-1zM4 6h1v1h-1zM3 7h1v1h-1zM2 8h1v1h-1zM1 9h1v1h-1zM0 10h1v1h-1zM0 11h7v1h-7z"/><path transform="translate(1244 717)" d="M2 0h3v1h-3zM1 1h1v1h-1zM5 1h1v1h-1zM0 2h1v1h-1zM6 2h1v1h-1zM6 3h1v1h-1zM6 4h1v1h-1zM5 5h1v1h-1zM4 6h1v1h-1zM3 7h1v1h-1zM2 8h1v1h-1zM1 9h1v1h-1zM0 10h1v1h-1zM0 11h7v1h-7z"/><path transform="translate(1253 717)" d="M0 11h1v1h-1z"/><path transform="translate(1257 717)" d="M2 0h3v1h-3zM1 1h1v1h-1zM5 1h1v1h-1zM1 2h1v1h-1zM5 2h1v1h-1zM0 3h1v1h-1zM6 3h1v1h-1zM0 4h1v1h-1zM6 4h1v1h-1zM0 5h1v1h-1zM6 5h1v1h-1zM0 6h1v1h-1zM6 6h1v1h-1zM0 7h1v1h-1zM6 7h1v1h-1zM0 8h1v1h-1zM6 8h1v1h-1zM1 9h1v1h-1zM5 9h1v1h-1zM1 10h1v1h-1zM5 10h1v1h-1zM2 11h3v1h-3z"/><path transform="translate(1341 717)" d="M2 0h3v1h-3zM1 1h1v1h-1zM5 1h1v1h-1zM0 2h1v1h-1zM6 2h1v1h-1zM6 3h1v1h-1zM6 4h1v1h-1zM5 5h1v1h-1zM4 6h1v1h-1zM3 7h1v1h-1zM2 8h1v1h-1zM1 9h1v1h-1zM0 10h1v1h-1zM0 11h7v1h-7z"/><path transform="translate(1350 717)" d="M5 0h1v1h-1zM4 1h2v1h-2zM4 2h2v1h-2zM3 3h1v1h-1zM5 3h1v1h-1zM2 4h1v1h-1zM5 4h1v1h-1zM2 5h1v1h-1zM5 5h1v1h-1zM1 6h1v1h-1zM5 6h1v1h-1zM0 7h1v1h-1zM5 7h1v1h-1zM0 8h7v1h-7zM5 9h1v1h-1zM5 10h1v1h-1zM5 11h1v1h-1z"/><path transform="translate(1359 717)" d="M0 11h1v1h-1z"/><path transform="translate(1363 717)" d="M2 0h3v1h-3zM1 1h1v1h-1zM5 1h1v1h-1zM1 2h1v1h-1zM5 2h1v1h-1zM0 3h1v1h-1zM6 3h1v1h-1zM0 4h1v1h-1zM6 4h1v1h-1zM0 5h1v1h-1zM6 5h1v1h-1zM0 6h1v1h-1zM6 6h1v1h-1zM0 7h1v1h-1zM6 7h1v1h-1zM0 8h1v1h-1zM6 8h1v1h-1zM1 9h1v1h-1zM5 9h1v1h-1zM1 10h1v1h-1zM5 10h1v1h-1zM2 11h3v1h-3z"/><path transform="translate(1373 717)" d="M2 0h3v1h-3zM1 1h1v1h-1zM5 1h1v1h-1zM0 2h1v1h-1zM6 2h1v1h-1zM6 3h1v1h-1zM6 4h1v1h-1zM5 5h1v1h-1zM4 6h1v1h-1zM3 7h1v1h-1zM2 8h1v1h-1zM1 9h1v1h-1zM0 10h1v1h-1zM0 11h7v1h-7z"/><path transform="translate(1382 717)" d="M5 0h1v1h-1zM4 1h2v1h-2zM4 2h2v1h-2zM3 3h1v1h-1zM5 3h1v1h-1zM2 4h1v1h-1zM5 4h1v1h-1zM2 5h1v1h-1zM5 5h1v1h-1zM1 6h1v1h-1zM5 6h1v1h-1zM0 7h1v1h-1zM5 7h1v1h-1zM0 8h7v1h-7zM5 9h1v1h-1zM5 10h1v1h-1zM5 11h1v1h-1z"/><path transform="translate(1391 717)" d="M0 11h1v1h-1z"/><path transform="translate(1395 717)" d="M2 0h3v1h-3zM1 1h1v1h-1zM5 1h1v1h-1zM0 2h1v1h-1zM6 2h1v1h-1zM0 3h1v1h-1zM6 3h1v1h-1zM1 4h1v1h-1zM5 4h1v1h-1zM2 5h3v1h-3zM1 6h1v1h-1zM5 6h1v1h-1zM0 7h1v1h-1zM6 7h1v1h-1zM0 8h1v1h-1zM6 8h1v1h-1zM0 9h1v1h-1zM6 9h1v1h-1zM1 10h1v1h-1zM5 10h1v1h-1zM2 11h3v1h-3z"/></g></svg>
<div id="ytitle">Höhe (m)</div>
<div id="xtitle">Entfernung   (km)</div>
</div></body></html>
